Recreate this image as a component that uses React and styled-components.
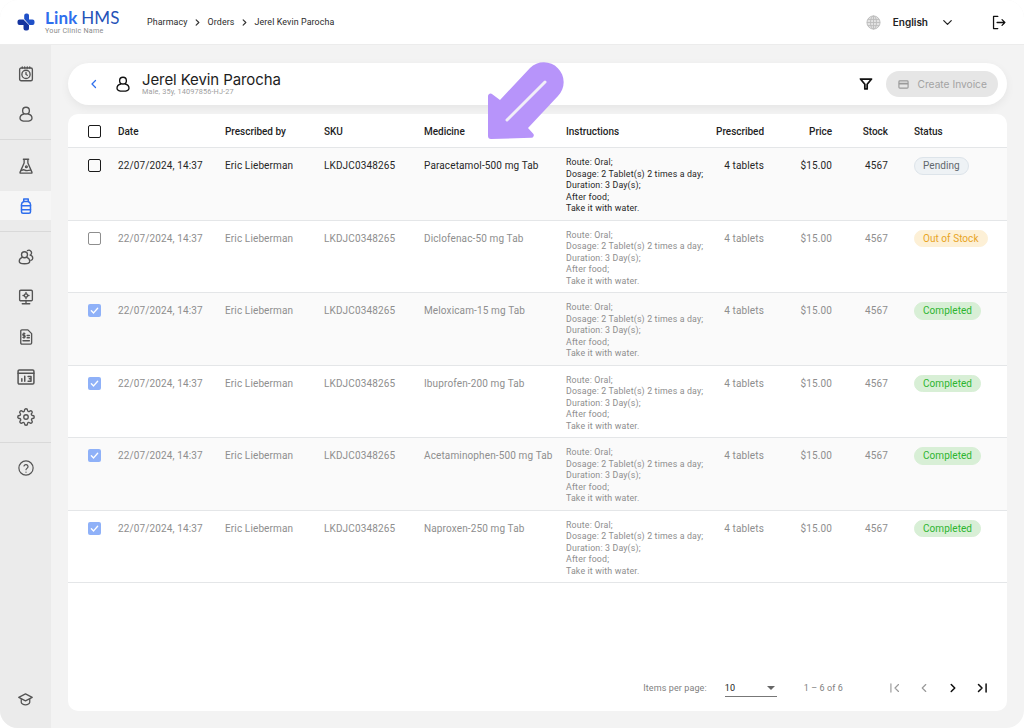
import React from "react";
import styled, { createGlobalStyle } from "styled-components";

const Global = createGlobalStyle`
  html, body { margin: 0; padding: 0; background: #fff; }
  body { font-family: Roboto, "Liberation Sans", sans-serif; color: #1c1c1c; }
  #root { width: 1024px; height: 728px; overflow: hidden; }
  * { box-sizing: border-box; }
`;

const Frame = styled.div`
  position: relative;
  width: 1024px;
  height: 728px;
  display: grid;
  grid-template-rows: 45px 1fr;
  border-radius: 18px;
  overflow: hidden;
  background: #f3f3f3;
`;

const TopBar = styled.header`
  display: flex;
  align-items: center;
  background: #fff;
  border-bottom: 1px solid #ececec;
  padding: 0 17px;
`;

const Logo = styled.div`
  display: flex;
  align-items: center;
  width: 130px;
  gap: 10px;
`;

const LogoText = styled.div`
  display: flex;
  flex-direction: column;
  margin-top: -1px;
`;

const LogoName = styled.div`
  font-family: Lato, sans-serif;
  font-size: 17px;
  line-height: 15px;
  letter-spacing: 0.2px;
  font-weight: 400;
  white-space: nowrap;
  color: #2552b8;
`;

const LogoLink = styled.span`
  font-weight: 700;
  color: #2f6fed;
  margin-right: 3.5px;
`;

const LogoSub = styled.div`
  font-size: 7.2px;
  line-height: 7px;
  color: #8b8b8b;
  letter-spacing: 0.22px;
  margin-top: 2px;
`;

const Crumbs = styled.nav`
  display: flex;
  align-items: center;
  gap: 5.5px;
  font-size: 8.9px;
  color: #2b2b2b;
  letter-spacing: 0.1px;
`;

const TopRight = styled.div`
  margin-left: auto;
  display: flex;
  align-items: center;
`;

const Globe = styled.svg`
  width: 15px;
  height: 15px;
  margin-right: -2px;
`;

const Language = styled.span`
  font-size: 10px;
  font-weight: 600;
  margin: 0 12px 0 14px;
  font-family: Inter, sans-serif;
  color: #222;
`;

const Body = styled.div`
  display: grid;
  grid-template-columns: 51px 1fr;
  min-height: 0;
`;

const Side = styled.aside`
  background: #ebebeb;
  display: flex;
  flex-direction: column;
  align-items: stretch;
  padding-top: 9px;
`;

const SideGroup = styled.div`
  display: flex;
  flex-direction: column;
  padding-bottom: ${p => p.$pb ?? 6}px;
  border-bottom: ${p => (p.$last ? "none" : "1px solid #d9d9d9")};
  margin-bottom: ${p => p.$mb ?? 6}px;
`;

const SideItem = styled.div`
  height: ${p => p.$h ?? 40}px;
  display: flex;
  align-items: center;
  justify-content: center;
  color: ${p => (p.$active ? "#2f6fed" : "#545454")};
  background: ${p => (p.$active ? "#f6f6f6" : "transparent")};
`;

const SideFoot = styled.div`
  margin-top: auto;
  height: 37px;
  display: flex;
  justify-content: center;
  color: #545454;
`;

const Main = styled.main`
  padding: 18px 17px 17px;
  display: flex;
  flex-direction: column;
  gap: 9px;
  min-height: 0;
`;

const Head = styled.section`
  height: 42px;
  flex: none;
  background: #fff;
  border-radius: 21px;
  box-shadow: 0 3px 10px rgba(0, 0, 0, 0.06);
  display: flex;
  align-items: center;
  padding: 0 9px 0 20px;
`;

const Name = styled.div`
  margin-left: 10px;
  display: flex;
  flex-direction: column;
`;

const NameTitle = styled.div`
  font-family: Inter, sans-serif;
  font-size: 15px;
  line-height: 17px;
  letter-spacing: -0.1px;
  margin-top: -2px;
  color: #1d1d1d;
`;

const NameSub = styled.div`
  font-size: 7.3px;
  line-height: 8px;
  color: #a0a0a0;
  letter-spacing: 0.15px;
`;

const HeadRight = styled.div`
  margin-left: auto;
  display: flex;
  align-items: center;
  gap: 13px;
`;

const InvoiceBtn = styled.button`
  width: 112px;
  height: 26px;
  border: 0;
  border-radius: 13px;
  background: #e6e6e6;
  color: #a3a3a3;
  display: flex;
  align-items: center;
  gap: 8.5px;
  padding: 0 0 0 12px;
  font-family: Inter, sans-serif;
  font-size: 10.2px;
  white-space: nowrap;
`;

const Card = styled.section`
  flex: 1;
  min-height: 0;
  background: #fff;
  border-radius: 10px;
  display: flex;
  flex-direction: column;
`;

const cols = "19.5px 30.5px 107px 99px 100px 142px 150px 48px 68px 56px 26px 1fr";

const HeadRow = styled.div`
  height: 34px;
  display: grid;
  grid-template-columns: ${cols};
  align-items: center;
  border-bottom: 1px solid #e4e6e8;
  font-size: 10px;
  font-weight: 500;
  letter-spacing: -0.03px;
  color: #1f1f1f;
  padding-top: 1px;
`;

const Row = styled.div`
  height: 72.5px;
  display: grid;
  grid-template-columns: ${cols};
  align-items: start;
  padding-top: 10px;
  background: ${p => (p.$odd ? "#fafafa" : "#fff")};
  border-bottom: 1px solid #e4e6e8;
  font-size: 10px;
  letter-spacing: 0.13px;
  line-height: 15px;
  color: ${p => (p.$dim ? "#8e8e8e" : "#262626")};
`;

const Cell = styled.div`
  grid-column: ${p => p.$col};
  text-align: ${p => (p.$right ? "right" : "left")};
  white-space: nowrap;
`;

const Instructions = styled.div`
  grid-column: 7;
  font-size: 8.8px;
  line-height: 11.5px;
  letter-spacing: 0.16px;
  white-space: nowrap;
  margin-top: -1px;
`;

const Check = styled.span`
  display: inline-flex;
  align-items: center;
  justify-content: center;
  width: 13px;
  height: 13px;
  border-radius: 2px;
  border: ${p => (p.$checked ? "none" : `1.5px solid ${p.$dim ? "#8e8e8e" : "#1a1a1a"}`)};
  background: ${p => (p.$checked ? "#8fb1f8" : "transparent")};
  margin-top: ${p => p.$top ?? 0}px;
  vertical-align: top;
`;

const tones = {
  Pending: "background:#eef2f5;border:1px solid #dde4ea;color:#62676c;",
  "Out of Stock": "background:#fdf0d6;border:1px solid #fdf0d6;color:#e8a41f;",
  Completed: "background:#d8efd6;border:1px solid #d8efd6;color:#2db52f;",
};

const Pill = styled.span`
  display: inline-block;
  height: 17.5px;
  line-height: 15.5px;
  padding: 0 8px;
  border-radius: 9px;
  font-size: 10px;
  letter-spacing: 0.05px;
  margin-top: -1px;
  vertical-align: top;
  ${p => tones[p.$status]}
`;

const Pager = styled.footer`
  margin-top: auto;
  height: 46px;
  padding: 0 17px 0 0;
  display: flex;
  align-items: center;
  justify-content: flex-end;
  font-size: 9px;
  color: #7f7f7f;
  letter-spacing: 0.1px;
`;

const Select = styled.div`
  width: 52px;
  height: 17px;
  margin: 0 27px 0 18px;
  border-bottom: 1px solid #777;
  color: #222;
  font-size: 9px;
  display: flex;
  align-items: center;
  justify-content: space-between;
  padding-right: 2px;
  &::after {
    content: "";
    border-left: 4.5px solid transparent;
    border-right: 4.5px solid transparent;
    border-top: 4px solid #666;
  }
`;

const PagerIcons = styled.div`
  margin-left: 45px;
  margin-right: 1px;
  display: flex;
  align-items: center;
  gap: 15px;
`;

const PagerIcon = styled.span`
  width: 14px;
  height: 14px;
  display: block;
  color: ${p => (p.$off ? "#9a9a9a" : "#111")};
`;

const BackIcon = styled.span`
  display: flex;
  width: 12px;
  color: #2f6fed;
`;

const PatientIcon = styled.span`
  display: flex;
  color: #111;
  margin-left: 14px;
`;

const LangChevron = styled.span`
  display: flex;
  color: #222;
`;

const LogoutIcon = styled.span`
  display: flex;
  color: #111;
  margin-left: 35px;
`;

const ArrowMark = styled.svg`
  position: absolute;
  left: 480px;
  top: 55px;
  width: 90px;
  height: 90px;
  pointer-events: none;
`;

const Ico = ({ size = 18, sw = 1.8, children }) => (
  <svg width={size} height={size} viewBox="0 0 24 24" fill="none" stroke="currentColor" strokeWidth={sw} strokeLinecap="round" strokeLinejoin="round">{children}</svg>
);

const Chev = ({ color = "#333", size = 9 }) => (
  <svg width={size} height={size} viewBox="0 0 10 10" fill="none" stroke={color} strokeWidth="1.3" strokeLinecap="round" strokeLinejoin="round"><path d="M3.5 2 6.5 5l-3 3" /></svg>
);

const UserIcon = ({ size = 18, sw = 1.8 }) => (
  <Ico size={size} sw={sw}>
    <circle cx="12" cy="7.5" r="4.5" />
    <path d="M9 12C5.5 13 4 15.5 4 17.5 4 20 7 21.5 12 21.5s8-1.5 8-4c0-2-1.5-4.5-5-5.5" />
  </Ico>
);

const sideIcons = {
  clock: <Ico><rect x="3.5" y="4" width="17" height="17" rx="2" /><path d="M7 2.5v1.5M10.3 2.5v1.5M13.7 2.5v1.5M17 2.5v1.5" /><circle cx="12" cy="12.5" r="5.5" /><path d="M12 10v2.7l1.8 1" /></Ico>,
  user: <UserIcon />,
  flask: <Ico><path d="M8.5 3h7M9.5 3v5L4 20.5a.7.7 0 0 0 .6 1h14.8a.7.7 0 0 0 .6-1L14.5 8V3" /><path d="M6 18c1.500-1 3-1.500 4.500-.5s3 1 7.500 0" /><circle cx="12.5" cy="13" r="1.2" /></Ico>,
  bottle: <Ico sw={2}><path d="M9 2.5h6v3.5H9z" /><path d="M9 6c-2 1-3 2-3 4v9.5A2 2 0 0 0 8 21.5h8a2 2 0 0 0 2-2V10c0-2-1-3-3-4" /><path d="M6 11.5h12M6 17h12" /></Ico>,
  group: <Ico><circle cx="10" cy="9" r="4" /><path d="M7 12.5C4 13.5 3 15.5 3 17.5 3 20 5.5 21 10 21s7-1 7-3.5c0-2-1-4-4-5" /><path d="M14 3.5a3.5 3.5 0 0 1 5 4.500c-.3.6-.8 1-1.500 1.500 2 .5 3.500 2 3.500 4 0 1.500-.8 2.500-2.500 3" /></Ico>,
  screen: <Ico><rect x="3.5" y="3" width="17" height="14" rx="1.5" /><path d="M12 17v3.5M7 21h10" /><circle cx="12" cy="10" r="2.2" /><path d="M12 5.8v2M12 12.2v2M8 10h1.8M14.2 10H16" /></Ico>,
  bill: <Ico><path d="M6.5 2.5h8L19.5 7.5v12.5a1.5 1.5 0 0 1-1.5 1.5H6.5A1.5 1.5 0 0 1 5 20V4A1.5 1.5 0 0 1 6.5 2.5Z" /><path d="M10.5 7.5H9a1.2 1.2 0 0 0 0 2.5h.6a1.2 1.2 0 0 1 0 2.5H8M9.3 6.5v7M13.5 10h3M13.5 13h3M8 17h8.5" /></Ico>,
  report: <Ico size={20}><rect x="2.5" y="3.5" width="19" height="17" rx="1.5" /><path d="M2.5 7.5h19M7 17v-3M10.5 17v-6M14.5 11.5h3.5v5.5h-3.5M18 14h-2" /></Ico>,
  gear: <Ico><circle cx="12" cy="12" r="3" /><path d="M19.4 15a1.65 1.65 0 0 0 .33 1.82l.06.06a2 2 0 1 1-2.83 2.83l-.06-.06a1.65 1.65 0 0 0-2.82 1.17V21a2 2 0 1 1-4 0v-.09a1.65 1.65 0 0 0-2.82-1.17l-.06.06a2 2 0 1 1-2.83-2.83l.06-.06A1.65 1.65 0 0 0 3.09 14H3a2 2 0 1 1 0-4h.09a1.65 1.65 0 0 0 1.17-2.82l-.06-.06a2 2 0 1 1 2.83-2.83l.06.06A1.65 1.65 0 0 0 10 3.09V3a2 2 0 1 1 4 0v.09a1.65 1.65 0 0 0 2.82 1.17l.06-.06a2 2 0 1 1 2.83 2.83l-.06.06A1.65 1.65 0 0 0 20.91 10H21a2 2 0 1 1 0 4h-.09a1.65 1.65 0 0 0-1.51 1Z" /></Ico>,
  help: <Ico sw={1.6}><circle cx="12" cy="12" r="9.5" /><path d="M9.3 9.3a2.8 2.8 0 0 1 5.4.9c0 1.9-2.7 2.5-2.7 4.1" /><path d="M12 17.5h.01" /></Ico>,
  cap: <Ico size={17}><path d="M12 4 2.5 9 12 14l9.5-5L12 4Z" /><path d="M6 11.5V16c0 1.5 2.7 3.5 6 3.5s6-2 6-3.5v-4.5" /></Ico>,
};

const meds = [
  ["Paracetamol-500 mg Tab", "Pending", false, false],
  ["Diclofenac-50 mg Tab", "Out of Stock", true, false],
  ["Meloxicam-15 mg Tab", "Completed", true, true],
  ["Ibuprofen-200 mg Tab", "Completed", true, true],
  ["Acetaminophen-500 mg Tab", "Completed", true, true],
  ["Naproxen-250 mg Tab", "Completed", true, true],
];

const Tick = () => (
  <svg width="9" height="9" viewBox="0 0 10 10" fill="none" stroke="#fff" strokeWidth="1.5" strokeLinecap="round" strokeLinejoin="round"><path d="M1.5 5.3 4 7.7 8.5 2.5" /></svg>
);

export default function App() {
  return (
    <>
      <Global />
      <Frame>
        <TopBar>
          <Logo>
            <svg width="18" height="18" viewBox="0 0 18 18">
              <path d="M7.2 6V2.5a2 2 0 0 1 2-2H10a2 2 0 0 1 2 2v4h3.5a2 2 0 0 1 2 2V10a2 2 0 0 1-2 2h-3Z" fill="#1f50c8" />
              <path d="M6.5 6.5h-4a2 2 0 0 0-2 2V10a2 2 0 0 0 2 2h4v3.5a2 2 0 0 0 2 2H10a2 2 0 0 0 2-2V12Z" fill="#14349f" />
            </svg>
            <LogoText>
              <LogoName><LogoLink>Link</LogoLink>HMS</LogoName>
              <LogoSub>Your Clinic Name</LogoSub>
            </LogoText>
          </Logo>
          <Crumbs>
            <span>Pharmacy</span><Chev />
            <span>Orders</span><Chev />
            <span>Jerel Kevin Parocha</span>
          </Crumbs>
          <TopRight>
            <Globe viewBox="0 0 24 24" fill="none" stroke="#bdbdbd" strokeWidth="1.5">
              <circle cx="12" cy="12" r="10.5" fill="#e3e3e3" />
              <ellipse cx="12" cy="12" rx="4.8" ry="10.5" />
              <path d="M1.5 12h21M3 7h18M3 17h18M12 1.5v21" />
            </Globe>
            <Language>English</Language>
            <LangChevron><Ico size={15} sw={2}><path d="m6 9 6 6 6-6" /></Ico></LangChevron>
            <LogoutIcon>
              <Ico size={17} sw={1.8}><path d="M11 3.5H5v17h6M10 12h11M17 8l4 4-4 4" /></Ico>
            </LogoutIcon>
          </TopRight>
        </TopBar>
        <Body>
          <Side>
            <SideGroup $pb={5} $mb={0}>
              <SideItem>{sideIcons.clock}</SideItem>
              <SideItem>{sideIcons.user}</SideItem>
            </SideGroup>
            <SideGroup $pb={11} $mb={5}>
              <SideItem $h={51}>{sideIcons.flask}</SideItem>
              <SideItem $h={29} $active>{sideIcons.bottle}</SideItem>
            </SideGroup>
            <SideGroup $pb={5} $mb={5}>
              <SideItem>{sideIcons.group}</SideItem>
              <SideItem>{sideIcons.screen}</SideItem>
              <SideItem>{sideIcons.bill}</SideItem>
              <SideItem>{sideIcons.report}</SideItem>
              <SideItem>{sideIcons.gear}</SideItem>
            </SideGroup>
            <SideGroup $last>
              <SideItem>{sideIcons.help}</SideItem>
            </SideGroup>
            <SideFoot>{sideIcons.cap}</SideFoot>
          </Side>
          <Main>
            <Head>
              <BackIcon><Ico size={12} sw={2.6}><path d="m15 5-7 7 7 7" /></Ico></BackIcon>
              <PatientIcon><UserIcon size={18} sw={1.8} /></PatientIcon>
              <Name>
                <NameTitle>Jerel Kevin Parocha</NameTitle>
                <NameSub>Male, 35y, 14097856-HJ-27</NameSub>
              </Name>
              <HeadRight>
                <svg width="14" height="14" viewBox="0 0 24 24" fill="none" stroke="#111" strokeWidth="3" strokeLinejoin="round" strokeLinecap="round">
                  <path d="M2.5 3.5h19L14 12.5v8h-4v-8Z" />
                </svg>
                <InvoiceBtn>
                  <svg width="11" height="11" viewBox="0 0 24 24" fill="none" stroke="#9b9b9b" strokeWidth="2.5">
                    <rect x="2" y="4" width="20" height="16" rx="2" />
                    <path d="M2 10h20" strokeWidth="4" />
                  </svg>
                  Create Invoice
                </InvoiceBtn>
              </HeadRight>
            </Head>
            <Card>
              <HeadRow>
                <Cell $col={2}><Check /></Cell>
                <Cell $col={3}>Date</Cell>
                <Cell $col={4}>Prescribed by</Cell>
                <Cell $col={5}>SKU</Cell>
                <Cell $col={6}>Medicine</Cell>
                <Cell $col={7}>Instructions</Cell>
                <Cell $col={8} $right>Prescribed</Cell>
                <Cell $col={9} $right>Price</Cell>
                <Cell $col={10} $right>Stock</Cell>
                <Cell $col={12}>Status</Cell>
              </HeadRow>
              {meds.map(([name, status, dim, checked], i) => (
                <Row key={name} $odd={i % 2 === 0} $dim={dim}>
                  <Cell $col={2}>
                    <Check $dim={dim} $checked={checked} $top={1}>{checked && <Tick />}</Check>
                  </Cell>
                  <Cell $col={3}>22/07/2024, 14:37</Cell>
                  <Cell $col={4}>Eric Lieberman</Cell>
                  <Cell $col={5}>LKDJC0348265</Cell>
                  <Cell $col={6}>{name}</Cell>
                  <Instructions>
                    Route: Oral;<br />
                    Dosage: 2 Tablet(s) 2 times a day;<br />
                    Duration: 3 Day(s);<br />
                    After food;<br />
                    Take it with water.
                  </Instructions>
                  <Cell $col={8} $right>4 tablets</Cell>
                  <Cell $col={9} $right>$15.00</Cell>
                  <Cell $col={10} $right>4567</Cell>
                  <Cell $col={12}><Pill $status={status}>{status}</Pill></Cell>
                </Row>
              ))}
              <Pager>
                <span>Items per page:</span>
                <Select>10</Select>
                <span>1 – 6 of 6</span>
                <PagerIcons>
                  <PagerIcon $off><Ico size={14} sw={2}><path d="M5 5v14M18 6l-6 6 6 6" /></Ico></PagerIcon>
                  <PagerIcon $off><Ico size={14} sw={2}><path d="m15 6-6 6 6 6" /></Ico></PagerIcon>
                  <PagerIcon><Ico size={14} sw={2.6}><path d="m9 6 6 6-6 6" /></Ico></PagerIcon>
                  <PagerIcon><Ico size={14} sw={2.6}><path d="m6 6 6 6-6 6M19 5v14" /></Ico></PagerIcon>
                </PagerIcons>
              </Pager>
            </Card>
          </Main>
        </Body>
        <ArrowMark viewBox="480 55 90 90">
          <path d="M488 96a2.5 2.5 0 0 1 4.3-1.8L500 100 530 68a19.8 19.8 0 0 1 28 28L528 128l5 5.5a2.5 2.5 0 0 1-1.8 4.3L491 139a3 3 0 0 1-3-3Z" fill="#b794fa" />
          <path d="M545 82 507 120" stroke="#f1eef8" strokeWidth="3" strokeLinecap="round" fill="none" />
        </ArrowMark>
      </Frame>
    </>
  );
}
